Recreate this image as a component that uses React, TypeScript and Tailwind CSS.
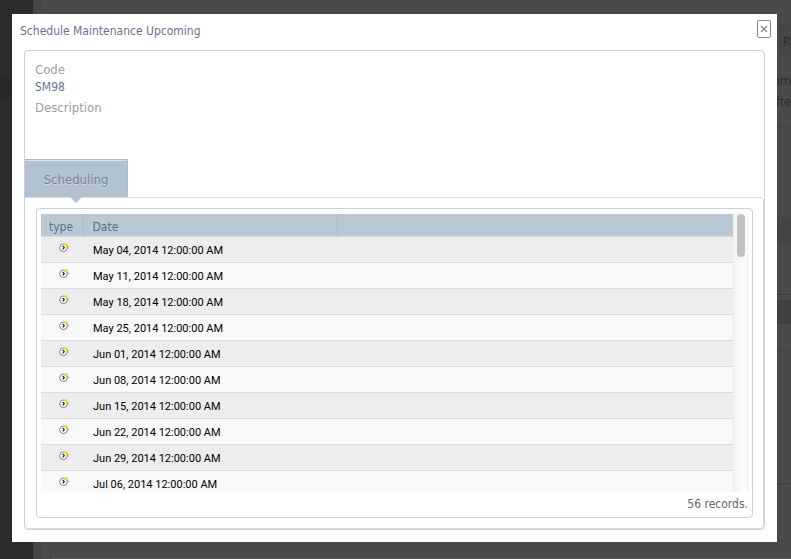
import clsx from 'clsx';

const dates = [
    'May 04, 2014 12:00:00 AM',
    'May 11, 2014 12:00:00 AM',
    'May 18, 2014 12:00:00 AM',
    'May 25, 2014 12:00:00 AM',
    'Jun 01, 2014 12:00:00 AM',
    'Jun 08, 2014 12:00:00 AM',
    'Jun 15, 2014 12:00:00 AM',
    'Jun 22, 2014 12:00:00 AM',
    'Jun 29, 2014 12:00:00 AM',
    'Jul 06, 2014 12:00:00 AM',
];

function ClockIcon() {
    return (
        <svg width="10" height="10" viewBox="0 0 10 10" fill="none" aria-label="scheduled">
            <circle cx="4.5" cy="4.8" r="3.8" fill="#fff" stroke="#94739a" />
            <path d="M4.5 .5H9v4L7.500 3.500 5 2.500z" fill="#e3dc3a" />
            <path d="M9 3v2.500" stroke="#a58fa8" />
            <path d="M3.700 3 5.300 4.700 3.700 6.400" stroke="#222" strokeWidth="1.200" />
        </svg>
    );
}

// dimmed page behind the dialog
function Backdrop() {
    return (
        <div className="flex min-h-screen bg-[#4a4a4a]" aria-hidden="true">
            <div className="w-[33px] bg-[#2b2d2c] pt-[77px]">
                <div className="h-6 bg-[#272928]" />
            </div>
            <div className="w-2 bg-[#434547]" />
            <div className="w-2.5 border-r border-[#454545]" />
            <div className="flex-1 border-b border-[#5a5a5a]" />
            <div className="w-[22px] border-b border-[#5a5a5a] font-['Noto_Sans',sans-serif] text-[12px] leading-5 text-[#2e2e2e]">
                <div className="h-[26px] border-b border-[#434343]" />
                <div className="h-[29px] bg-[#474747] pl-3.5 pt-1.5">R</div>
                <div className="pt-4 text-right">om</div>
                <div className="h-[36px] border-b border-[#424242] pt-px">afte</div>
                <div className="mt-[90px] h-[27px] bg-[#424445]" />
                <div className="h-[51px] border-b border-[#3c3c3c]" />
                <div className="mt-[5px] h-6 bg-[#3f4041]" />
                <div className="h-[27px] border-b border-[#414141]" />
                <div className="h-[133px] border-b border-[#3e3e3e]" />
            </div>
        </div>
    );
}

function ScheduleTable() {
    return (
        <div className="flex h-[279px] overflow-hidden">
            <div className="flex-1 pt-px">
                <table className="w-full table-fixed border-collapse text-left">
                    <thead>
                        <tr className="h-[22px] border-b border-[#d9d9d9] bg-[#bac8d5] text-[12px] leading-[18px] text-[#587085]">
                            <th className="w-[42px] p-0 pl-2 pt-1 font-normal">type</th>
                            <th className="w-[254px] border-x border-[#a8bccb] p-0 pl-[9px] pt-1 font-normal">Date</th>
                            <th className="p-0" />
                        </tr>
                    </thead>
                    <tbody>
                        {dates.map((date, idx) => (
                            <tr
                                key={date}
                                className={clsx(
                                    'h-[26px] border-b border-[#dadada]',
                                    idx % 2 === 0 ? 'bg-[#ededed]' : 'bg-[#f8f8f8]'
                                )}
                            >
                                <td className="p-0 pb-1 pl-[18px]">
                                    <ClockIcon />
                                </td>
                                <td className="p-0 pl-2.5 pt-[3px] font-['Roboto',sans-serif] text-[11px] leading-4 text-black">
                                    {date}
                                </td>
                                <td className="p-0" />
                            </tr>
                        ))}
                    </tbody>
                </table>
            </div>
            <div className="w-[15px] border-x border-[#ededed] bg-linear-to-r from-[#f3f3f3] to-white pl-[3px] pt-px">
                <div className="h-[43px] w-2 rounded-full bg-[#c1c1c1]" />
            </div>
        </div>
    );
}

export default function App() {
    return (
        <div className="relative min-h-screen overflow-hidden font-['DejaVu_Sans_Condensed','DejaVu_Sans',sans-serif]">
            <Backdrop />
            <div
                role="dialog"
                aria-labelledby="dialog-title"
                className="absolute left-3 right-3.5 top-3.5 bg-white px-3 pb-3"
            >
                <div className="flex h-9 items-start justify-between">
                    <h1 id="dialog-title" className="-ml-1 pt-2 text-[12px] leading-[18px] text-[#68748f]">
                        Schedule Maintenance Upcoming
                    </h1>
                    <button
                        type="button"
                        aria-label="Close"
                        className="-mr-1.5 mt-1.5 flex h-[18px] w-3.5 items-center justify-center rounded-[2px] border border-[#8c8c8c] text-[#8c8c8c]"
                    >
                        <svg width="8" height="8" viewBox="0 0 8 8" stroke="currentColor" strokeWidth="1.500">
                            <path d="M1 1l6 6M7 1L1 7" />
                        </svg>
                    </button>
                </div>

                <div className="rounded-[4px] border border-[#cdcdd8]">
                    <dl className="h-[108px] px-2.5 pt-2.5 text-[13px]">
                        <dt className="leading-[18px] text-[#999fa3]">Code</dt>
                        <dd className="text-[12px] leading-4 text-[#68748f]">SM98</dd>
                        <dt className="mt-1 leading-[18px] text-[#999fa3]">Description</dt>
                        <dd />
                    </dl>

                    <div role="tablist" className="flex">
                        <button
                            type="button"
                            role="tab"
                            aria-selected="true"
                            className="relative h-[38px] w-[103px] border border-b-0 border-l-0 border-[#a9bdca] bg-[#b2c3cf] pt-0.5 text-[13px] text-[#7880a0] shadow-[inset_0_1px_0_#dce5eb] text-shadow-[0_1px_0_#cfd9e0]"
                        >
                            Scheduling
                            <svg className="absolute left-[45px] top-full" width="12" height="6" viewBox="0 0 12 6">
                                <path d="M0 0h12L6 6z" fill="#b2c3cf" />
                            </svg>
                        </button>
                    </div>

                    <div className="rounded-tr-[4px] rounded-b-[4px] border border-l-0 border-[#dcdcdc] pb-2.5 pl-[11px] pr-2.5 pt-2.5">
                        <div className="rounded-[4px] border border-[#cdcdd8] px-1 pt-1">
                            <ScheduleTable />
                            <p className="h-[25px] text-right text-[12px] leading-6 text-[#666]">56 records.</p>
                        </div>
                    </div>
                </div>
            </div>
        </div>
    );
}
